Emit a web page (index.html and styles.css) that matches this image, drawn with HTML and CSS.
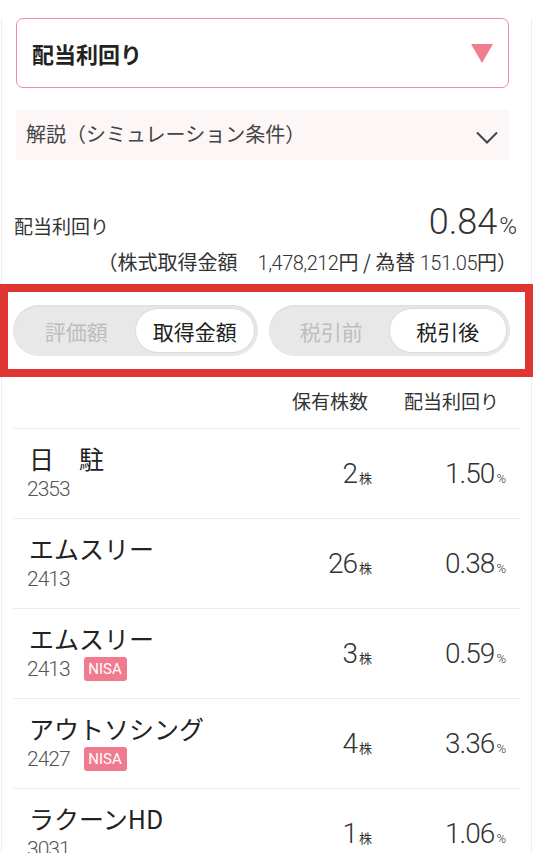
FILE: index.html
```html
<!DOCTYPE html>
<html lang="ja">
<head>
<meta charset="utf-8">
<title>配当利回り</title>
<link rel="stylesheet" href="styles.css">
</head>
<body>
<div class="page">
  <div class="select">
    <span>配当利回り</span>
    <span class="tri"></span>
  </div>

  <div class="explain">
    <span class="explain-text">解説（シミュレーション条件）</span>
    <svg class="chev" width="22" height="13" viewBox="0 0 22 13"><polyline points="1,1.5 11,11.5 21,1.5" fill="none" stroke="#444" stroke-width="2"/></svg>
  </div>

  <div class="summary">
    <div class="sum-top">
      <span class="sum-label">配当利回り</span>
      <span class="sum-val"><span class="big">0.84</span><span class="big-pct">%</span></span>
    </div>
    <div class="sum-sub">（株式取得金額　<span class="n">1,478,212</span>円 / 為替 <span class="n">151.05</span>円）</div>
  </div>

  <div class="toggles">
    <div class="seg">
      <span class="opt">評価額</span>
      <span class="opt on">取得金額</span>
    </div>
    <div class="seg">
      <span class="opt">税引前</span>
      <span class="opt on">税引後</span>
    </div>
  </div>

  <div class="list">
    <div class="head">
      <span></span>
      <span class="h-qty">保有株数</span>
      <span class="h-yld">配当利回り</span>
    </div>

    <div class="row">
      <div class="stock">
        <div class="name">日　駐</div>
        <div class="code"><span>2353</span></div>
      </div>
      <div class="qty"><span class="q">2</span><span class="u">株</span></div>
      <div class="yld"><span class="y">1.50</span><span class="p">%</span></div>
    </div>

    <div class="row">
      <div class="stock">
        <div class="name">エムスリー</div>
        <div class="code"><span>2413</span></div>
      </div>
      <div class="qty"><span class="q">26</span><span class="u">株</span></div>
      <div class="yld"><span class="y">0.38</span><span class="p">%</span></div>
    </div>

    <div class="row">
      <div class="stock">
        <div class="name">エムスリー</div>
        <div class="code"><span>2413</span><span class="badge">NISA</span></div>
      </div>
      <div class="qty"><span class="q">3</span><span class="u">株</span></div>
      <div class="yld"><span class="y">0.59</span><span class="p">%</span></div>
    </div>

    <div class="row">
      <div class="stock">
        <div class="name">アウトソシング</div>
        <div class="code"><span>2427</span><span class="badge">NISA</span></div>
      </div>
      <div class="qty"><span class="q">4</span><span class="u">株</span></div>
      <div class="yld"><span class="y">3.36</span><span class="p">%</span></div>
    </div>

    <div class="row">
      <div class="stock">
        <div class="name">ラクーンHD</div>
        <div class="code"><span>3031</span></div>
      </div>
      <div class="qty"><span class="q">1</span><span class="u">株</span></div>
      <div class="yld"><span class="y">1.06</span><span class="p">%</span></div>
    </div>
  </div>
</div>
</body>
</html>
```

FILE: styles.css
```css
* { box-sizing: border-box; }
html, body { margin: 0; padding: 0; background: #fff; }
body {
  font-family: "Noto Sans CJK JP", sans-serif;
  color: #222;
}
.page {
  margin: 0 1px;
  border-left: 1px solid #eee;
  border-right: 1px solid #eee;
  min-height: 853px;
}

/* select */
.select {
  margin: 18px 22px 0 14px;
  height: 70px;
  border: 1.5px solid #f08c9b;
  border-radius: 7px;
  display: flex;
  align-items: center;
  justify-content: space-between;
  padding: 0 15px 0 15px;
  font-size: 22px;
  font-weight: 700;
  color: #222;
}
.tri {
  width: 0;
  height: 0;
  border-left: 11px solid transparent;
  border-right: 11px solid transparent;
  border-top: 19px solid #f07e8f;
}

/* explanation */
.explain {
  margin: 22px 22px 0 14px;
  height: 50px;
  background: #fdf6f6;
  display: flex;
  align-items: center;
  justify-content: space-between;
  padding: 0 11px 0 10px;
  font-size: 20px;
  color: #444;
}
.explain-text { margin-top: -3px; }
.chev { margin-top: 4px; }

/* summary */
.summary {
  margin-top: 45px;
  padding: 0 14px 0 12px;
}
.sum-top {
  display: flex;
  justify-content: space-between;
  align-items: baseline;
  line-height: 34px;
}
.sum-label {
  font-size: 19px;
  line-height: 24px;
  color: #333;
}
.big {
  font-family: Roboto, sans-serif;
  font-weight: 300;
  font-size: 36px;
  color: #333;
}
.big-pct {
  font-family: Roboto, sans-serif;
  font-weight: 300;
  font-size: 24px;
  color: #333;
  margin-left: 2px;
}
.sum-sub {
  margin-top: 5px;
  text-align: right;
  font-size: 20px;
  line-height: 26px;
  color: #333;
}
.sum-sub .n {
  font-family: Roboto, sans-serif;
  font-weight: 300;
  letter-spacing: -0.5px;
}

/* toggles (highlighted) */
.toggles {
  margin: 8px -2px 0;
  border: 8px solid #df3631;
  padding: 13px 15px 13px 5px;
  display: grid;
  grid-template-columns: 245fr 241fr;
  gap: 11px;
}
.seg {
  display: grid;
  grid-template-columns: 1fr 1fr;
  padding: 4px;
  height: 51px;
  background: #e8e8e8;
  border-radius: 26px;
  box-shadow: inset 0 1px 2px rgba(0, 0, 0, 0.06);
}
.opt {
  display: flex;
  align-items: center;
  justify-content: center;
  border-radius: 22px;
  font-size: 21px;
  color: #bdbdbd;
}
.opt.on {
  background: #fff;
  color: #222;
  box-shadow: 0 0 0 1px #dcdcdc;
}

/* list */
.list {
  margin: 0 11px;
}
.head {
  display: grid;
  grid-template-columns: 1fr 110px 134px;
  align-items: center;
  height: 52px;
  padding: 0 14px 5px;
  border-bottom: 1px solid #eee;
  font-size: 19px;
  color: #333;
}
.h-qty { text-align: right; padding-right: 4px; }
.h-yld { text-align: right; padding-right: 7px; }

.row {
  display: grid;
  grid-template-columns: 1fr 110px 134px;
  align-items: center;
  height: 90px;
  padding: 0 14px;
  border-bottom: 1px solid #eee;
}
.stock {
  display: flex;
  flex-direction: column;
}
.name {
  font-size: 25px;
  line-height: 30px;
  color: #222;
  padding-left: 2px;
  margin-top: -3px;
}
.code {
  display: flex;
  align-items: center;
  gap: 14px;
  height: 24px;
  margin-top: 4px;
  font-family: Roboto, sans-serif;
  font-weight: 300;
  font-size: 21px;
  letter-spacing: -1px;
  color: #555;
}
.badge {
  display: flex;
  align-items: center;
  justify-content: center;
  width: 43px;
  height: 24px;
  border-radius: 3px;
  background: #f07b8e;
  color: #fff;
  font-family: Roboto, sans-serif;
  font-weight: 400;
  font-size: 15px;
  letter-spacing: 0;
}
.qty, .yld {
  text-align: right;
  color: #333;
  white-space: nowrap;
}
.q, .y {
  font-family: Roboto, sans-serif;
  font-weight: 300;
  font-size: 28px;
  letter-spacing: -1px;
}
.u {
  font-size: 13px;
  margin-left: 2px;
}
.p {
  font-family: Roboto, sans-serif;
  font-weight: 300;
  font-size: 13px;
  margin-left: 2px;
}
```
